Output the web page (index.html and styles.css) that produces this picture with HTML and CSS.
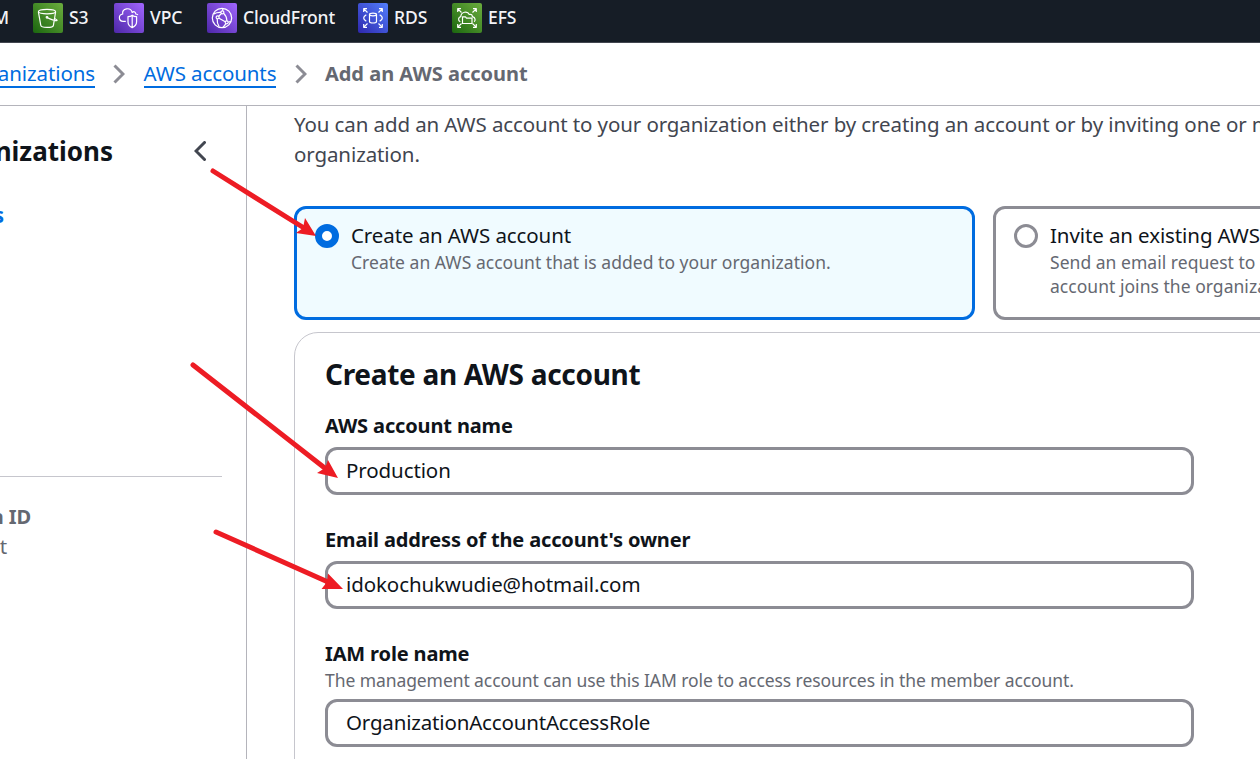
FILE: index.html
```
<!DOCTYPE html>
<html lang="en">
<head>
<meta charset="utf-8">
<title>Add an AWS account</title>
<link rel="stylesheet" href="styles.css">
</head>
<body>
<div class="page">
  <nav class="services">
    <span class="service service-iam"><span class="name">IAM</span></span>
    <a class="service service-s3"><svg class="icon" viewBox="0 0 30 30"><defs><linearGradient id="green" x1="0" y1="1" x2="1" y2="0"><stop offset="0" stop-color="#1b660f"/><stop offset="1" stop-color="#6cae3e"/></linearGradient><linearGradient id="purple" x1="0" y1="1" x2="1" y2="0"><stop offset="0" stop-color="#4d27a8"/><stop offset="1" stop-color="#a166ff"/></linearGradient><linearGradient id="blue" x1="0" y1="1" x2="1" y2="0"><stop offset="0" stop-color="#2e27ad"/><stop offset="1" stop-color="#527fff"/></linearGradient></defs><rect width="30" height="30" rx="2" fill="url(#green)"/><g class="stroke"><ellipse cx="14" cy="8.600" rx="8.600" ry="2.300"/><path d="M5.400 8.800 7.800 22.300c.3 2.800 12.200 2.800 12.600 0L22.600 9M14 14.500c3.200 1.600 6.800 3.200 9.500 3.200 1.600-.2-.3-1.300-2.200-2.500"/><circle cx="14" cy="14.300" r=".8"/></g></svg><span class="name">S3</span></a>
    <a class="service service-vpc"><svg class="icon" viewBox="0 0 30 30"><rect width="30" height="30" rx="2" fill="url(#purple)"/><g class="stroke"><path d="M11.800 18.400H9.200c-5-.4-5-6.500-.5-7.400C7.800 5.200 16.500 3.600 18.200 9.500c1.900-1.700 3.500-.3 3.600 1.500 1.200.1 1.900.6 2 1"/><path d="M18.200 12.200c-1.300 1.100-2.800 1.400-4.200 1.400v5.100c0 3 1.500 4.700 4.200 5.900 2.700-1.200 4.400-2.900 4.400-5.900v-5.100c-1.700 0-3.100-.3-4.400-1.400zM18.200 12.200v12.300"/></g></svg><span class="name">VPC</span></a>
    <a class="service service-cf"><svg class="icon" viewBox="0 0 30 30"><rect width="30" height="30" rx="2" fill="url(#purple)"/><g class="stroke"><circle cx="15" cy="15" r="9.700"/><path d="M14 9.400c-4.400-.3-6.200 1-7.200 1.600M16.600 10.200c2.200 2 3.200 4.500 3.300 7.500M14.500 10.500l-2.800 2.700M10.200 15.800c-.3 2.700.4 5.400 2 8M12 15.200l6.300 3.500M15.600 7.800c-.1-1 .2-1.900.6-2.500M18.800 20.600c-.8 1.500-1.700 2.700-3 3.800M21.300 19.200l2.400-.8"/><circle cx="15.400" cy="9.300" r="1.500"/><circle cx="10.600" cy="14.300" r="1.500"/><circle cx="19.700" cy="19.300" r="1.500"/></g></svg><span class="name">CloudFront</span></a>
    <a class="service service-rds"><svg class="icon" viewBox="0 0 30 30"><rect width="30" height="30" rx="2" fill="url(#blue)"/><g class="stroke"><path d="M9.500 9.500 5.800 5.800M5.700 9V5.700H9M20.500 9.500l3.700-3.700M21 5.700h3.300V9M9.500 20.500l-3.700 3.700M5.700 21v3.300H9M20.500 20.500l3.700 3.700M21 24.300h3.300V21"/><ellipse cx="15" cy="11.500" rx="3.500" ry="1.300"/><path d="M11.500 11.500v7c0 2 7 2 7 0v-7M8.300 11.800C4.800 14 4.800 16 8.300 18.300M21.700 11.800c3.500 2.200 3.500 4.200 0 6.500"/></g></svg><span class="name">RDS</span></a>
    <a class="service service-efs"><svg class="icon" viewBox="0 0 30 30"><rect width="30" height="30" rx="2" fill="url(#green)"/><g class="stroke"><path d="M9.500 9.500 5.800 5.800M5.700 9V5.700H9M20.500 9.500l3.700-3.700M21 5.700h3.300V9M9.500 20.500l-3.700 3.700M5.700 21v3.300H9M20.500 20.500l3.700 3.700M21 24.300h3.300V21"/><path d="M10.500 20.500v-6.700h3l1 1.400h5.500v5.300zM8.300 18.700c-2.700-1.300-2-4.600.5-5.100.1-4.700 6.700-6.300 8.500-2.100 2.200-.7 3 .6 3.100 2.200 3.300.9 3.200 4 1.700 5"/></g></svg><span class="name">EFS</span></a>
  </nav>

  <header class="crumbs">
    <a class="crumb-cut"><span class="link">Organizations</span></a>
    <svg class="chevron" viewBox="0 0 12 20"><path d="M1.500 1.500 10 10l-8.500 8.500"/></svg>
    <a class="link">AWS accounts</a>
    <svg class="chevron chevron-last" viewBox="0 0 12 20"><path d="M1.500 1.500 10 10l-8.500 8.500"/></svg>
    <span class="current">Add an AWS account</span>
  </header>

  <div class="body">
    <aside class="side">
      <div class="side-head">
        <div class="side-title">AWS Organizations</div>
        <svg class="collapse" viewBox="0 0 12 20"><path d="M10.500 1.500 2 10l8.500 8.500"/></svg>
      </div>
      <div class="side-link">AWS accounts</div>
      <div class="side-info">
        <div class="side-label">Organization ID</div>
        <div class="side-value">t</div>
      </div>
    </aside>

    <main class="main">
      <p class="intro">You can add an AWS account to your organization either by creating an account or by inviting one or more<br>organization.</p>
      <div class="tiles">
        <div class="tile tile-on">
          <span class="radio radio-on"></span>
          <div>
            <div class="tile-title">Create an AWS account</div>
            <div class="tile-desc">Create an AWS account that is added to your organization.</div>
          </div>
        </div>
        <div class="tile">
          <span class="radio"></span>
          <div>
            <div class="tile-title">Invite an existing AWS account</div>
            <div class="tile-desc">Send an email request to the owner of the<br>account joins the organization.</div>
          </div>
        </div>
      </div>
      <section class="panel">
        <h2 class="panel-title">Create an AWS account</h2>
        <div class="field">
          <div class="label">AWS account name</div>
          <div class="input">Production</div>
        </div>
        <div class="field">
          <div class="label">Email address of the account's owner</div>
          <div class="input">idokochukwudie@hotmail.com</div>
        </div>
        <div class="field">
          <div class="label">IAM role name</div>
          <div class="hint">The management account can use this IAM role to access resources in the member account.</div>
          <div class="input input-role">OrganizationAccountAccessRole</div>
        </div>
      </section>
    </main>
  </div>

  <svg class="arrows" viewBox="0 0 1260 759">
    <g class="shaft"><path d="M213 171 304 228"/><path d="M193 365 326 469"/><path d="M216 532 328 582"/></g>
    <g class="head"><path d="M316 236 296 233 303 228 305 218z"/><path d="M338 478 317 473 325 468 328 460z"/><path d="M343 589 321.500 589 327 582 328 573.500z"/></g>
  </svg>
</div>
</body>
</html>
```
FILE: styles.css
```
* { box-sizing: border-box; }

body {
  margin: 0;
  background: #fff;
  color: #0f141a;
  font-family: "Noto Sans", "Open Sans", sans-serif;
  font-size: 20.5px;
  line-height: 30px;
  letter-spacing: -0.1px;
}

.page {
  position: relative;
  width: 1260px;
  height: 759px;
  overflow: hidden;
  display: flex;
  flex-direction: column;
  white-space: nowrap;
}

/* Service shortcuts */
.services {
  flex: none;
  display: flex;
  height: 43px;
  padding-top: 3px;
  background: #161d26;
  border-bottom: 1px solid #424650;
  color: #f3f3f7;
  font-size: 17.5px;
  font-weight: 500;
}
.service { display: flex; flex: none; gap: 6px; }
.service-iam { width: 33px; padding-right: 24px; justify-content: flex-end; }
.service-s3 { width: 81px; }
.service-vpc { width: 93px; }
.service-cf { width: 151px; }
.service-rds { width: 94px; }
.name { line-height: 28px; }
.icon { width: 30px; height: 30px; }
.stroke { fill: none; stroke: #fff; stroke-width: 1.2; stroke-linejoin: round; }

/* Breadcrumbs */
.crumbs {
  flex: none;
  display: flex;
  align-items: center;
  height: 63px;
  border-bottom: 1px solid #b4b4bb;
}
.crumb-cut { width: 95px; display: flex; justify-content: flex-end; }
.link { padding: 1px 0; color: #006ce0; line-height: 24px; border-bottom: 2px solid #006ce0; }
.chevron { width: 12px; height: 20px; margin: 0 18.5px 0 18px; fill: none; stroke: #8c8c94; stroke-width: 3; }
.chevron-last { margin: 0 17.5px 0 19px; }
.current { color: #656871; font-size: 20px; font-weight: 700; letter-spacing: 0; }

/* Side navigation */
.body { display: flex; flex: 1; min-height: 0; }
.side { flex: none; width: 247px; border-right: 1px solid #b4b4bb; }
.side-head { display: flex; align-items: center; padding-top: 30px; }
.side-title { flex: none; display: flex; justify-content: flex-end; width: 113px; font-size: 26px; font-weight: 700; letter-spacing: 0; }
.collapse { width: 12px; height: 20px; margin-left: 81px; fill: none; stroke: #424650; stroke-width: 3; stroke-linecap: round; }
.side-link { display: flex; justify-content: flex-end; width: 4px; margin-top: 34px; color: #006ce0; font-weight: 700; }
.side-info { width: 222px; margin-top: 246px; padding-top: 25px; border-top: 1px solid #c6c6cd; color: #656871; }
.side-label { display: flex; justify-content: flex-end; width: 31px; font-size: 20px; font-weight: 700; }
.side-value { display: flex; justify-content: flex-end; width: 7px; line-height: 28px; }

/* Main column */
.main { flex: 1; min-width: 0; padding: 3px 0 0 47px; }
.intro { margin: 0; color: #424650; }
.tiles { display: flex; gap: 18px; margin-top: 37px; }
.tile { flex: none; display: flex; gap: 12px; width: 681px; height: 114px; padding: 11px 18px; border: 3px solid #8c8c94; border-radius: 12px; }
.tile-on { border-color: #006ce0; background: #f0fbff; }
.radio { flex: none; width: 24px; height: 24px; margin-top: 4px; border: 3px solid #8c8c94; border-radius: 50%; background: #fff; }
.radio-on { border: 7px solid #006ce0; }
.tile-desc { color: #656871; font-size: 17.5px; line-height: 24px; letter-spacing: 0.03px; }

.panel { width: 1100px; height: 600px; margin-top: 12px; padding: 26px 30px; border: 1px solid #c6c6cd; border-radius: 24px; }
.panel-title { margin: 0 0 22px; font-size: 28px; line-height: 30px; letter-spacing: -0.3px; }
.field { margin-bottom: 30px; }
.label { margin-bottom: 6px; font-size: 20px; font-weight: 700; letter-spacing: -0.14px; }
.field:last-child .label { margin-bottom: -1px; }
.hint { margin-bottom: 7px; color: #656871; font-size: 17.5px; line-height: 24px; letter-spacing: -0.08px; }
.input { width: 869px; height: 48px; padding: 5px 18px; border: 3px solid #8c8c94; border-radius: 12px; }
.input-role { letter-spacing: -0.17px; }

/* Annotation arrows over the page */
.arrows { position: absolute; inset: 0; width: 1260px; height: 759px; }
.shaft { fill: none; stroke: #ed1c24; stroke-width: 5; stroke-linecap: round; }
.head { fill: #ed1c24; }
```
